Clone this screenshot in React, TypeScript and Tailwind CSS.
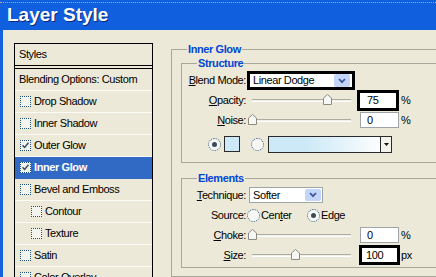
import type { ReactNode } from 'react';

type StyleItem = {
  label: string;
  checked?: boolean;
  active?: boolean;
  indent?: boolean;
};

const styleItems: StyleItem[] = [
  { label: 'Drop Shadow' },
  { label: 'Inner Shadow' },
  { label: 'Outer Glow', checked: true },
  { label: 'Inner Glow', checked: true, active: true },
  { label: 'Bevel and Emboss' },
  { label: 'Contour', indent: true },
  { label: 'Texture', indent: true },
  { label: 'Satin' },
  { label: 'Color Overlay' },
];

function CheckBox({ checked }: { checked?: boolean }) {
  return (
    <span className="flex h-[11px] w-[11px] shrink-0 items-center justify-center border border-dotted border-[#1c5180] bg-[#f4f4ef]">
      {checked && (
        <svg width="7" height="7" viewBox="0 0 7 7" className="block">
          <path d="M0.5 3.2 L2.6 5.4 L6.5 0.8" fill="none" stroke="#33475e" strokeWidth="1.4" />
        </svg>
      )}
    </span>
  );
}

function Radio({ selected }: { selected?: boolean }) {
  return (
    <span className="flex h-[13px] w-[13px] shrink-0 items-center justify-center rounded-full border border-dotted border-[#1c5180] bg-[#f6f6f2]">
      {selected && <span className="h-[5px] w-[5px] rounded-full bg-[#3d4a57]" />}
    </span>
  );
}

function ComboButton({ className = '' }: { className?: string }) {
  return (
    <span className={`ml-auto flex w-[16px] shrink-0 items-center justify-center rounded-[2px] bg-[#c3d5f8] ${className}`}>
      <svg width="8" height="6" viewBox="0 0 8 6" className="block">
        <path d="M1 1 L4 4.2 L7 1" fill="none" stroke="#3c55a0" strokeWidth="1.8" />
      </svg>
    </span>
  );
}

// slider: thumb offset is measured from the slider's left edge, track starts 4px in
function Slider({ thumb }: { thumb: number }) {
  return (
    <div className="relative ml-[2px] h-full w-[104px] shrink-0">
      <div className="absolute left-[4px] right-[1px] top-[9px] h-[3px] border-t border-[#aeaca0] border-b border-b-white bg-[#f1f0e8]" />
      <svg
        width="9"
        height="11"
        viewBox="0 0 9 11"
        className="absolute top-[4px] block"
        style={{ left: thumb }}
      >
        <path d="M0.5 4 L4.5 0.5 L8.5 4 L8.5 10.5 L0.5 10.5 Z" fill="#f7f7f3" stroke="#8d8c84" />
      </svg>
    </div>
  );
}

function Label({ children }: { children: ReactNode }) {
  return <span className="w-[64px] shrink-0 text-right">{children}</span>;
}

function Group({ title, className = '', children }: { title: string; className?: string; children: ReactNode }) {
  return (
    <fieldset className={`shrink-0 border border-[#a8a79b] ${className}`}>
      <legend className="ml-[15px] px-[1px] font-bold leading-[13px] text-[#0046d5]">{title}</legend>
      {children}
    </fieldset>
  );
}

export default function App() {
  return (
    <div className="flex h-[277px] w-[436px] flex-col overflow-hidden bg-[#ece9d8] font-['Liberation_Sans',Arial,sans-serif] text-[11px] leading-[13px] tracking-[-0.4px] text-black">
      <div className="h-[30px] shrink-0 bg-[#0f5fdf]">
        <div className="mt-[2px] border-t border-dotted border-[#c9a873]" />
        <div className="pl-[7px] pt-[1px] text-[19px] font-bold leading-[22px] tracking-normal text-white [text-shadow:1px_1px_0_#0b2a78]">
          Layer Style
        </div>
      </div>

      <div className="flex min-h-0 flex-1 border-l-[3px] border-[#1560dd]">
        {/* styles list */}
        <div className="ml-[11px] mt-[13px] w-[139px] shrink-0 border-x border-t border-black">
          <div className="flex h-[22px] items-center border-b border-black pl-[4px]">Styles</div>
          <div className="h-[2px]" />
          <div className="border-t border-black">
            <div className="flex h-[22px] items-center border-b border-[#fbfbf7] pl-[4px]">
              Blending Options: Custom
            </div>
            {styleItems.map((item) => (
              <div
                key={item.label}
                className={[
                  'flex h-[22px] items-center gap-[3px] border-b',
                  item.indent ? 'pl-[16px]' : 'pl-[5px]',
                  item.active
                    ? 'border-[#316ac5] bg-[#316ac5] font-bold text-white'
                    : 'border-[#fbfbf7]',
                ].join(' ')}
              >
                <CheckBox checked={item.checked} />
                <span>{item.label}</span>
              </div>
            ))}
          </div>
        </div>

        {/* inner glow panel */}
        <Group title="Inner Glow" className="ml-[18px] mt-[13px] w-[300px] pb-[30px]">
          <Group title="Structure" className="ml-[9px] mt-[1px] w-[280px] pb-[6px]">
            <div className="mt-[1px] flex h-[19px] items-center">
              <Label>
                <u>B</u>lend Mode:
              </Label>
              <div className="ml-[1px] flex h-[19px] w-[108px] items-center border-[3px] border-black bg-white pl-[3px]">
                <span>Linear Dodge</span>
                <ComboButton className="mr-[2px] h-[13px]" />
              </div>
            </div>

            <div className="flex h-[20px] items-center">
              <Label>
                <u>O</u>pacity:
              </Label>
              <Slider thumb={75} />
              <div className="ml-[5px] flex h-[21px] w-[42px] shrink-0 items-center border-[3px] border-black bg-white pl-[7px]">
                75
              </div>
              <span className="ml-[2px]">%</span>
            </div>

            <div className="flex h-[20px] items-center">
              <Label>
                <u>N</u>oise:
              </Label>
              <Slider thumb={0} />
              <div className="ml-[8px] flex h-[16px] w-[39px] shrink-0 items-center border border-[#9fa4a8] bg-white pl-[6px]">
                0
              </div>
              <span className="ml-[2px]">%</span>
            </div>

            <div className="mt-[2px] flex h-[24px] items-center">
              <span className="ml-[26px]">
                <Radio selected />
              </span>
              <span className="ml-[3px] h-[16px] w-[16px] shrink-0 border border-[#2a2a2a] bg-[#cde9f7]" />
              <span className="ml-[11px]">
                <Radio />
              </span>
              <div className="ml-[4px] flex h-[17px] w-[124px] shrink-0 border border-[#2a2a2a] bg-[linear-gradient(to_right,#cde9f7_30%,#ffffff_95%)]">
                <span className="ml-auto flex w-[11px] items-center justify-center border-l border-[#2a2a2a] bg-[#f3f2ec]">
                  <svg width="5" height="3" viewBox="0 0 5 3" className="block">
                    <path d="M0 0 H5 L2.5 3 Z" fill="#111" />
                  </svg>
                </span>
              </div>
            </div>
          </Group>

          <Group title="Elements" className="ml-[9px] mt-[9px] w-[280px] pb-[2px]">
            <div className="flex h-[20px] items-center">
              <Label>
                <u>T</u>echnique:
              </Label>
              <div className="ml-[3px] flex h-[16px] w-[74px] shrink-0 items-center border border-[#9fa4a8] bg-white pl-[3px]">
                <span>Softer</span>
                <ComboButton className="mr-[1px] h-[12px]" />
              </div>
            </div>

            <div className="flex h-[20px] items-center">
              <Label>Source:</Label>
              <span className="ml-[1px]">
                <Radio />
              </span>
              <span className="ml-[1px] w-[46px] shrink-0">
                Cen<u>t</u>er
              </span>
              <Radio selected />
              <span className="ml-[1px]">Edge</span>
            </div>

            <div className="flex h-[20px] items-center">
              <Label>
                <u>C</u>hoke:
              </Label>
              <Slider thumb={0} />
              <div className="ml-[8px] flex h-[16px] w-[39px] shrink-0 items-center border border-[#9fa4a8] bg-white pl-[6px]">
                0
              </div>
              <span className="ml-[2px]">%</span>
            </div>

            <div className="flex h-[20px] items-center">
              <Label>
                <u>S</u>ize:
              </Label>
              <Slider thumb={43} />
              <div className="ml-[7px] flex h-[20px] w-[41px] shrink-0 items-center border-[3px] border-black bg-white pl-[4px]">
                100
              </div>
              <span className="ml-[1px]">px</span>
            </div>
          </Group>
        </Group>
      </div>
    </div>
  );
}
